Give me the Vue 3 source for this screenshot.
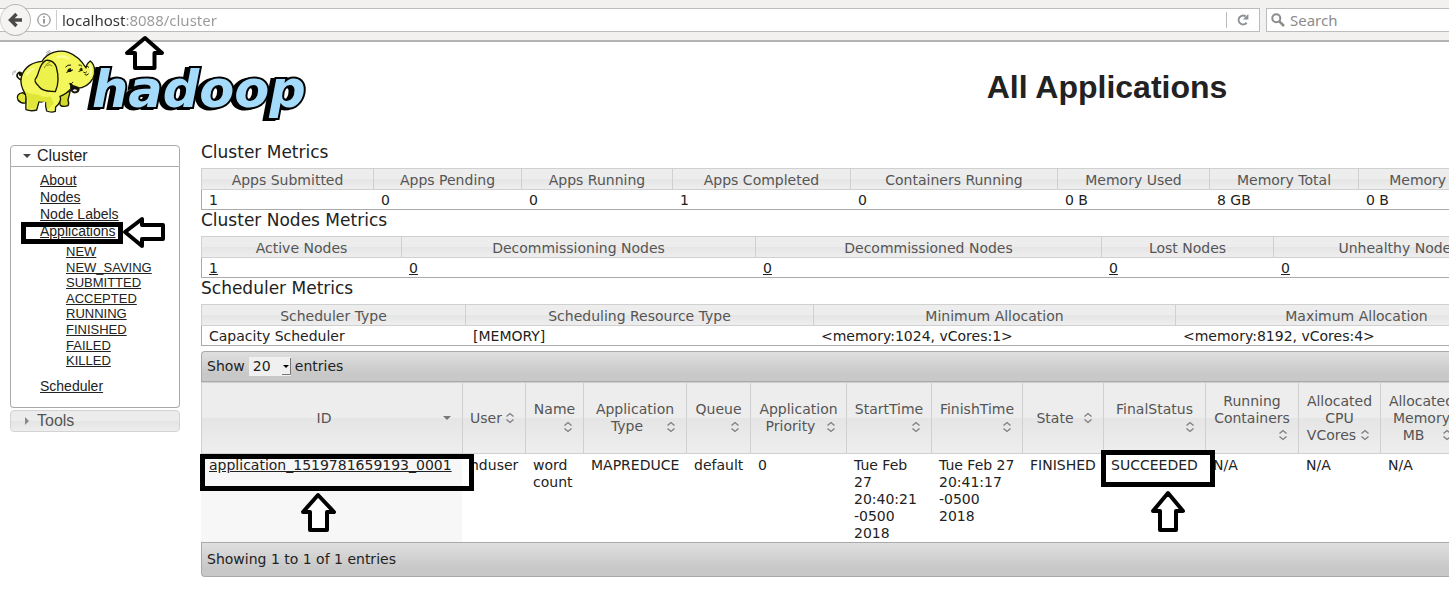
<script setup>
import { ref } from 'vue'

const url = ref('localhost:8088/cluster')
const search = ref('')
const pageSize = ref('20')

const appLinks = ['NEW', 'NEW_SAVING', 'SUBMITTED', 'ACCEPTED', 'RUNNING', 'FINISHED', 'FAILED', 'KILLED']

const metrics = [
  {
    title: 'Cluster Metrics',
    cols: [
      { name: 'Apps Submitted', value: '1', width: 172 },
      { name: 'Apps Pending', value: '0', width: 148 },
      { name: 'Apps Running', value: '0', width: 151 },
      { name: 'Apps Completed', value: '1', width: 178 },
      { name: 'Containers Running', value: '0', width: 207 },
      { name: 'Memory Used', value: '0 B', width: 152 },
      { name: 'Memory Total', value: '8 GB', width: 149 },
      { name: 'Memory Reserved', value: '0 B', width: 188 },
    ],
  },
  {
    title: 'Cluster Nodes Metrics',
    linked: true,
    cols: [
      { name: 'Active Nodes', value: '1', width: 200 },
      { name: 'Decommissioning Nodes', value: '0', width: 354 },
      { name: 'Decommissioned Nodes', value: '0', width: 346 },
      { name: 'Lost Nodes', value: '0', width: 172 },
      { name: 'Unhealthy Nodes', value: '0', width: 250 },
    ],
  },
  {
    title: 'Scheduler Metrics',
    cols: [
      { name: 'Scheduler Type', value: 'Capacity Scheduler', width: 264 },
      { name: 'Scheduling Resource Type', value: '[MEMORY]', width: 348 },
      { name: 'Minimum Allocation', value: '<memory:1024, vCores:1>', width: 362 },
      { name: 'Maximum Allocation', value: '<memory:8192, vCores:4>', width: 362 },
    ],
  },
]

const appCols = [
  { lines: [], last: 'ID', width: 261, sorted: true },
  { lines: [], last: 'User', width: 63 },
  { lines: ['Name'], last: '', width: 58 },
  { lines: ['Application'], last: 'Type', width: 103 },
  { lines: ['Queue'], last: '', width: 64 },
  { lines: ['Application'], last: 'Priority', width: 96 },
  { lines: ['StartTime'], last: '', width: 85 },
  { lines: ['FinishTime'], last: '', width: 91 },
  { lines: [], last: 'State', width: 81 },
  { lines: ['FinalStatus'], last: '', width: 102 },
  { lines: ['Running', 'Containers'], last: '', width: 93 },
  { lines: ['Allocated', 'CPU'], last: 'VCores', width: 82 },
  { lines: ['Allocated', 'Memory'], last: 'MB', width: 82 },
]
const row = ['hduser', 'word count', 'MAPREDUCE', 'default', '0', 'Tue Feb 27 20:40:21 -0500 2018',
  'Tue Feb 27 20:41:17 -0500 2018', 'FINISHED', 'SUCCEEDED', 'N/A', 'N/A', 'N/A']

const total = (cols) => cols.reduce((sum, c) => sum + c.width, 0) + 'px'
</script>

<template>
  <div class="page">
    <nav class="toolbar">
      <div class="address">
        <button class="back" aria-label="Back">
          <svg width="16" height="16" viewBox="0 0 16 16">
            <path d="M8.5 2 L2.5 8 L8.5 14 M3 8 H14" fill="none" stroke="#4a4a4a" stroke-width="3.4" />
          </svg>
        </button>
        <svg class="info" width="14" height="14" viewBox="0 0 14 14">
          <circle cx="7" cy="7" r="6.2" fill="none" stroke="#777" />
          <path d="M7 6v4.5M7 3.2v1.5" stroke="#777" stroke-width="1.5" />
        </svg>
        <input v-model="url" class="url" type="text" aria-label="Address" />
        <button class="reload" aria-label="Reload">
          <svg width="14" height="14" viewBox="0 0 14 14">
            <path d="M9.6 3.4 A4.4 4.4 0 1 0 10.6 9.6" fill="none" stroke="#8a9298" stroke-width="2" />
            <path d="M12.4 1 V6.6 H6.8 Z" fill="#8a9298" />
          </svg>
        </button>
      </div>
      <label class="search">
        <svg width="14" height="14" viewBox="0 0 14 14">
          <circle cx="5.3" cy="5.3" r="4" fill="none" stroke="#8c8c8c" stroke-width="2" />
          <path d="M8.3 8.3 L13 13" stroke="#8c8c8c" stroke-width="2.6" />
        </svg>
        <input v-model="search" type="text" placeholder="Search" aria-label="Search" />
      </label>
    </nav>

    <header class="masthead">
      <a href="#" class="logo" aria-label="Hadoop">
        <svg width="316" height="84" viewBox="0 45 316 84">
          <text class="wordmark" x="92" y="107">hadoop</text>
          <g transform="translate(10 42) scale(.3333)" stroke="#151500" stroke-width="4" stroke-linejoin="round" stroke-linecap="round">
            <path d="M37 113 C24 113 17 101 24 94 C30 88 38 94 33 99 C29 102 28 96 31 95" fill="none" stroke-width="5" />
            <path d="M8 98 Q7 91 12 87 M14 92 Q14 87 18 85 M108 40 Q112 32 121 29 M109 32 Q113 27 119 26" fill="none" stroke="#777" stroke-width="2" />
            <path d="M38 152 C25 154 18 163 24 174 C29 181 38 184 47 183 L50 160 Z" fill="#e2e73a" />
            <path d="M145 165 L151 190 Q161 196 174 191 Q178 186 174 174 L181 146 Z" fill="#d2d92a" />
            <path d="M96 58 C68 60 42 75 34 105 C29 126 37 142 46 156 C51 170 46 187 48 203 Q64 209 80 204 L87 179 Q98 182 108 175 Q105 192 110 207 Q124 213 136 208 L137 195 C150 184 154 172 150 163 C164 159 176 148 186 137 C211 142 235 133 249 109 C257 94 256 69 241 57 C232 64 228 71 228 78 C220 64 202 41 175 31 C147 21 111 33 96 58 Z" fill="#f3f75c" />
            <path d="M45 148 Q60 158 86 158 Q104 168 121 163 L132 184 Q119 198 112 203 L109 180 L84 178 L77 199 L53 201 Q57 174 45 148 Z" fill="#e0e638" stroke="none" />
            <path d="M108 55 C88 65 89 88 80 105 C67 119 83 127 88 135 C101 151 121 147 136 149 C147 126 145 97 139 75 Q130 53 108 55 Z" fill="#edf14c" />
            <path d="M103 77 Q108 64 119 61 M111 70 Q121 65 126 71" fill="none" stroke="#8c911a" stroke-width="3" />
            <path d="M182 125 C190 137 205 132 207 140 C207 151 193 157 186 148 Q181 139 182 125 Z" fill="#111" />
            <path d="M188 146 Q193 138 202 145 Q197 151 188 146" fill="#f4f4ee" stroke="none" />
            <path d="M173 87 Q174 79 182 80 L183 87 Z M210 82 Q212 77 216 79 L214 85 Z" fill="#222" stroke-width="3" />
            <path d="M167 75 Q173 67 182 69 M207 69 Q212 68 215 72 M170 91 L188 84 M207 88 L218 84 M221 91 Q227 96 230 90 M225 98 Q230 103 235 96 M229 70 L236 76 M178 126 Q186 127 189 121" fill="none" stroke-width="3" />
            <path d="M240 69 Q246 84 241 102" fill="none" stroke="#fbfdbb" stroke-width="5" />
            <path d="M142 46 Q158 39 175 49 M51 97 Q59 83 70 80" fill="none" stroke="#faff9a" stroke-width="6" />
          </g>
        </svg>
      </a>
      <h1>All Applications</h1>
    </header>

    <div class="body">
      <aside class="side">
        <h2 class="fold open"><svg width="8" height="4" viewBox="0 0 8 4"><path d="M0 0H8L4 4Z" /></svg>Cluster</h2>
        <div class="panel">
          <ul>
            <li><a href="#">About</a></li>
            <li><a href="#">Nodes</a></li>
            <li><a href="#">Node Labels</a></li>
            <li>
              <a href="#">Applications</a>
              <ul class="sub">
                <li v-for="l in appLinks" :key="l"><a href="#">{{ l }}</a></li>
              </ul>
            </li>
            <li><a href="#">Scheduler</a></li>
          </ul>
        </div>
        <h2 class="fold closed"><svg width="8" height="8" viewBox="0 0 8 8"><path d="M2 0V8L6 4Z" /></svg>Tools</h2>
      </aside>

      <main class="content">
        <section v-for="m in metrics" :key="m.title">
          <h3>{{ m.title }}</h3>
          <table class="metrics" :style="{ width: total(m.cols) }">
            <colgroup><col v-for="c in m.cols" :key="c.name" :style="{ width: c.width + 'px' }" /></colgroup>
            <thead><tr><th v-for="c in m.cols" :key="c.name" scope="col">{{ c.name }}</th></tr></thead>
            <tbody>
              <tr>
                <td v-for="c in m.cols" :key="c.name">
                  <a v-if="m.linked" href="#">{{ c.value }}</a>
                  <template v-else>{{ c.value }}</template>
                </td>
              </tr>
            </tbody>
          </table>
        </section>

        <div class="bar top">
          <label for="size">Show</label>
          <span class="picker">
            <select id="size" v-model="pageSize"><option>20</option><option>40</option><option>60</option></select>
            <svg width="9" height="18" viewBox="0 0 9 18"><path d="M1 8H7L4 11Z" fill="#000" /><path d="M8.5 1V17.5H0" fill="none" stroke="#777" /></svg>
          </span>
          <span>entries</span>
        </div>
        <table class="apps" :style="{ width: total(appCols) }">
          <colgroup><col v-for="(c, i) in appCols" :key="i" :style="{ width: c.width + 'px' }" /></colgroup>
          <thead>
            <tr>
              <th v-for="(c, i) in appCols" :key="i" scope="col">
                <div v-for="l in c.lines" :key="l">{{ l }}</div>
                <div class="last">
                  <span>{{ c.last }}</span>
                  <svg width="16" height="12" viewBox="0 0 16 12">
                    <path v-if="c.sorted" d="M4 4H12L8 8Z" fill="#777" />
                    <path v-else d="M4.5 4.5L8 1.5L11.5 4.5M4.5 7.5L8 10.5L11.5 7.5" fill="none" stroke="#7d7d7d" stroke-width="1.3" />
                  </svg>
                </div>
              </th>
            </tr>
          </thead>
          <tbody>
            <tr>
              <td class="id"><a href="#">application_1519781659193_0001</a></td>
              <td v-for="(v, i) in row" :key="i">{{ v }}</td>
            </tr>
          </tbody>
        </table>
        <div class="bar bottom">Showing 1 to 1 of 1 entries</div>
      </main>
    </div>

    <svg class="marks" width="1220" height="540" viewBox="0 0 1220 540" aria-hidden="true">
      <g fill="none" stroke="#000" stroke-width="5">
        <rect x="23.5" y="224.5" width="97" height="17" />
        <rect x="202.5" y="456.5" width="269" height="32" />
        <rect x="1103.5" y="452.5" width="109" height="32" />
      </g>
      <g fill="#fff" stroke="#000" stroke-width="4" stroke-linejoin="round">
        <path d="M145 38L162 53H154.5V68H135V53H127Z" />
        <path d="M125 232L142 219V225H163V239H142V246Z" />
        <path d="M318 495L334 512H327V530H310V512H303Z" />
        <path d="M1168 493L1183 511H1176V530H1160V511H1153Z" />
      </g>
    </svg>
  </div>
</template>

<style>
body { margin: 0; background: #fff; }
</style>

<style scoped>
* { box-sizing: border-box; }
.page { position: relative; min-height: 100vh; overflow: hidden; color: #222; font: 14px/17px "DejaVu Sans", sans-serif; }
button { padding: 0; border: 0; background: none; }
a { color: #222; }
h1, h2, h3, ul { margin: 0; padding: 0; font-weight: normal; list-style: none; }

.toolbar { display: flex; gap: 6px; height: 42px; padding-top: 8px; background: #f2f1f0; border-bottom: 2px solid #b3b3b3; }
.address, .search { display: flex; align-items: center; height: 24px; background: #fff; border: 1px solid #bcbcbc; }
.address { flex: 1; border-left: 0; }
.back { display: flex; flex: none; align-items: center; justify-content: center; width: 31px; height: 32px; border: 1px solid #b8b8b8; border-left-color: #d5d5d5; border-radius: 50%; background: #f5f4f3; }
.info { flex: none; margin: 0 6px; }
.url { flex: 1; min-width: 0; height: 20px; padding: 0 0 0 5px; border: 0; outline: 0; font: 15px/20px "Noto Sans", sans-serif; color: transparent; background: linear-gradient(90deg, #333 69px, #999 69px); background-clip: text; }
.info + .url { box-shadow: -1px 0 #ccc; }
.reload { display: flex; align-items: center; justify-content: center; width: 33px; height: 16px; border-left: 1px solid #bbb; }
.search { flex: 0 0 183px; min-width: 0; gap: 5px; padding-left: 4px; border-right: 0; }
.search input { flex: 1; min-width: 0; height: 20px; padding: 0; border: 0; outline: 0; background: none; font: 15px/20px "Noto Sans", sans-serif; color: #333; }
.search input::placeholder { color: #8c8c8c; opacity: 1; }

.masthead { display: flex; align-items: center; height: 100px; padding-bottom: 10px; }
.logo { flex: 0 0 52.8%; }
.logo svg { display: block; }
.wordmark { font: italic bold 51px "DejaVu Sans", sans-serif; fill: #a5dbfa; stroke: #000; stroke-width: 4px; stroke-linejoin: miter; paint-order: stroke; filter: drop-shadow(-4px 1px 0 #000); }
h1 { flex: 1; text-align: center; font: bold 32px/40px "Liberation Sans", Arial, sans-serif; }

.body { display: flex; gap: 21px; padding-left: 10px; }
.side { flex: 0 0 170px; padding-top: 3px; font-family: "Liberation Sans", Arial, sans-serif; }
.fold { display: flex; align-items: center; gap: 6px; height: 22px; padding-left: 12px; border: 1px solid #aaa; font-size: 16px; line-height: 20px; }
.fold svg { fill: #444; }
.open { border-radius: 4px 4px 0 0; }
.closed { margin-top: 2px; border-color: #d3d3d3; border-radius: 4px; color: #555; background: linear-gradient(#ececec 50%, #e4e4e4 50%, #eee); }
.closed svg { fill: #888; }
.panel { padding: 5px 0 12px 29px; border: 1px solid #aaa; border-top: 0; border-radius: 0 0 4px 4px; }
.sub { padding: 4px 0 9px 26px; font-size: 13px; line-height: 1.2; }

.content { flex: 1; min-width: 0; overflow: hidden; }
h3 { height: 26px; font-size: 17px; line-height: 21px; }
table { min-width: 100%; table-layout: fixed; border-collapse: separate; border-spacing: 0; }
th { padding: 0 7px; font-weight: normal; text-align: center; color: #555; border: 1px solid #d0d0d0; border-right-width: 0; background: linear-gradient(#ededed 50%, #e5e5e5 50%, #eee); white-space: nowrap; }
td { padding: 0 4px 0 8px; text-align: left; vertical-align: top; }
.metrics { border-bottom: 1px solid #aaa; }
.metrics th { height: 22px; padding: 3px 7px 0; }
.metrics td { height: 19px; padding-top: 2px; white-space: nowrap; }
.metrics td:first-child { padding-left: 7px; border-left: 1px solid #aaa; }

.bar { display: flex; align-items: center; gap: 4px; padding-left: 5px; border: 1px solid #aaa; border-right: 0; background: linear-gradient(#dfdfdf, #c8c8c8 75%); }
.top { height: 31px; margin-top: 5px; border-radius: 4px 0 0 0; }
.bottom { height: 35px; border-radius: 0 0 0 4px; }
.picker { position: relative; display: flex; width: 42px; height: 19px; }
.picker select { width: 100%; padding: 0 0 0 4px; border: 0; border-radius: 0; appearance: none; background: #f0f0f0; font: inherit; color: #222; }
.picker svg { position: absolute; right: 0; top: 0; pointer-events: none; }

.apps th { height: 72px; }
.last { display: flex; align-items: center; height: 17px; }
.last span { flex: 1; }
.last svg { flex: none; }
.apps td { height: 88px; padding-top: 3px; }
.apps .id { background: #f7f7f7; }

.marks { position: absolute; left: 0; top: 0; pointer-events: none; }
</style>
